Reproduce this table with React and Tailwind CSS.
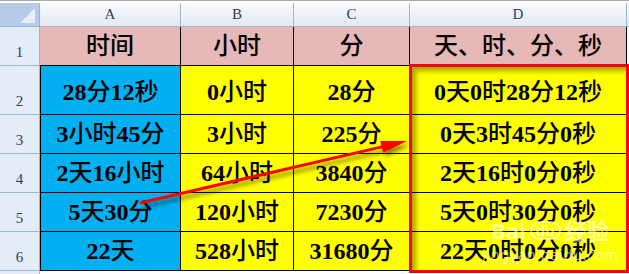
import React from 'react'

const cols = ['A', 'B', 'C', 'D']

const rows = [
    { n: 1, h: 'h-[39px]', cells: ['时间', '小时', '分', '天、时、分、秒'], head: true },
    { n: 2, h: 'h-[49px]', cells: ['28分12秒', '0小时', '28分', '0天0时28分12秒'] },
    { n: 3, h: 'h-[39px]', cells: ['3小时45分', '3小时', '225分', '0天3时45分0秒'] },
    { n: 4, h: 'h-[39px]', cells: ['2天16小时', '64小时', '3840分', '2天16时0分0秒'] },
    { n: 5, h: 'h-[39px]', cells: ['5天30分', '120小时', '7230分', '5天0时30分0秒'] },
    { n: 6, h: 'h-[39px]', cells: ['22天', '528小时', '31680分', '22天0时0分0秒'] },
]

const widths = ['w-[141px]', 'w-[113px]', 'w-[116px]', 'w-[217px]']

const font = { fontFamily: '"Liberation Serif", "Noto Sans CJK SC", serif' }

// digits bold serif, CJK a bit lighter
const CellText = ({ text }) => {
    const parts = text.match(/\d+|\D+/g)
    return (
        <span>
            {parts.map((p, i) =>
                /\d/.test(p)
                    ? <span key={i} className="font-bold">{p}</span>
                    : <span key={i} className="font-medium">{p}</span>
            )}
        </span>
    )
}

const Corner = () => (
    <div className="w-[40px] h-[24px] bg-[#b4cbea] border-r border-b border-[#9eb6ce]">
        <svg width="39" height="23" viewBox="0 0 39 23">
            <polygon points="35,5 35,20 20,20" fill="#e8eef8" />
        </svg>
    </div>
)

const App = () => {
    return (
        <div className="relative w-[629px] h-[274px] overflow-hidden bg-white" style={font}>
            <div className="h-[3px] border-t border-[#a7a7a7] bg-white" />

            {/* column headers */}
            <div className="flex">
                <Corner />
                {cols.map((c, i) => (
                    <div key={c} className={`${widths[i]} h-[24px] flex items-center justify-center border-r border-b border-[#9eb6ce] bg-gradient-to-b from-[#f8fafd] to-[#e2eaf5] text-[15px] text-[#27415f]`}>
                        {c}
                    </div>
                ))}
                <div className="flex-1 h-[24px] border-b border-[#9eb6ce] bg-gradient-to-b from-[#f8fafd] to-[#e2eaf5]" />
            </div>

            {rows.map(r => (
                <div key={r.n} className="flex">
                    <div className={`w-[40px] ${r.h} flex items-end justify-center pb-[2px] bg-[#e4ecf7] border-r border-b border-[#9eb6ce] text-[15px] text-[#27415f]`}>
                        {r.n}
                    </div>
                    {r.cells.map((t, i) => {
                        const bg = r.head ? 'bg-[#e6b8b7]' : i === 0 ? 'bg-[#00b0f0]' : 'bg-[#ffff00]'
                        const left = !r.head && i === 0 ? 'border-l' : ''
                        return (
                            <div key={i} className={`${widths[i]} ${r.h} ${bg} ${left} border-r border-b border-black flex items-center justify-center text-[24px] text-black leading-none ${r.n === 2 ? 'pt-[4px]' : ''}`}>
                                <CellText text={t} />
                            </div>
                        )
                    })}
                    <div className={`flex-1 ${r.h} border-b border-[#d0d7e5]`} />
                </div>
            ))}

            <div className="flex">
                <div className="w-[40px] h-[10px] bg-[#e4ecf7] border-r border-[#9eb6ce]" />
                <div className="flex-1 h-[10px] bg-white" />
            </div>

            {/* highlight box */}
            <div className="absolute left-[409px] top-[64px] w-[220px] h-[209px] border-[3px] border-[#ff0000] shadow-[inset_4px_4px_5px_rgba(0,0,0,0.35)]" />

            {/* arrow */}
            <svg className="absolute inset-0 pointer-events-none" width="629" height="274" viewBox="0 0 629 274">
                <defs>
                    <filter id="sh" x="-10%" y="-50%" width="120%" height="200%">
                        <feDropShadow dx="3" dy="4" stdDeviation="2" floodColor="#000" floodOpacity="0.45" />
                    </filter>
                </defs>
                <g filter="url(#sh)">
                    <line x1="140" y1="203" x2="383" y2="146.6" stroke="#ff0000" strokeWidth="3" />
                    <polygon points="407,141 380.3,141.1 383.1,152.7" fill="#ff0000" />
                </g>
            </svg>

            {/* watermark */}
            <div className="absolute left-[482px] top-[219px] flex flex-col items-center text-white/60 pointer-events-none" style={{ fontFamily: '"Noto Sans", "Noto Sans CJK SC", sans-serif' }}>
                <div className="flex items-center gap-1 text-[22px] font-bold leading-none">
                    <span>Bai</span>
                    <span className="text-[15px] px-1 rounded-full border-2 border-white/60">du</span>
                    <span>经验</span>
                </div>
                <div className="text-[15px] leading-none mt-[6px] tracking-wide">jingyan.baidu.com</div>
            </div>
        </div>
    )
}

export default App
